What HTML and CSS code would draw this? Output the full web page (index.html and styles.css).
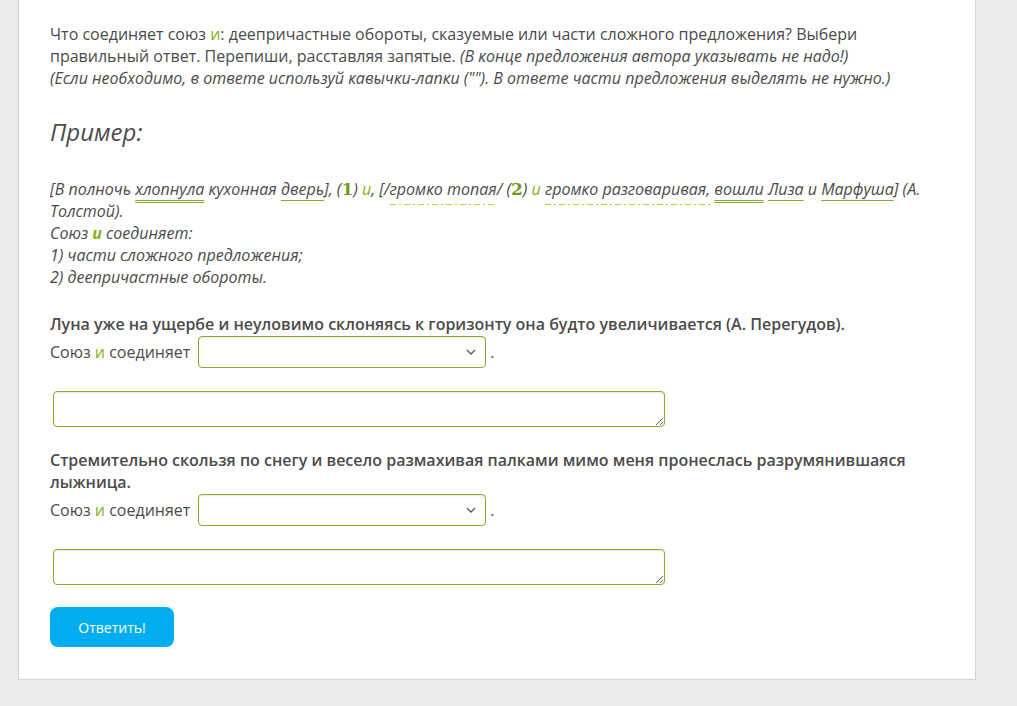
FILE: index.html
```html
<!DOCTYPE html>
<html lang="ru">
<head>
    <meta charset="UTF-8">
    <title>Союз и</title>
    <link rel="stylesheet" href="styles.css">
</head>
<body>
    <div class="card">
        <p class="task">
            Что соединяет союз <span class="green">и</span>: деепричастные обороты, сказуемые или части сложного предложения? Выбери правильный ответ. Перепиши, расставляя запятые. <i>(В конце предложения автора указывать не надо!)</i><br>
            <i>(Если необходимо, в ответе используй кавычки-лапки (""). В ответе части предложения выделять не нужно.)</i>
        </p>

        <h2 class="example-title">Пример:</h2>

        <p class="example">
            [В полночь <span class="pred">хлопнула</span> кухонная <span class="subj">дверь</span>], (<b class="num">1</b>) <span class="green">и</span>, [/<span class="adv">громко топая</span>/ (<b class="num">2</b>) <span class="green">и</span> <span class="adv">громко разговаривая,</span> <span class="pred">вошли</span> <span class="subj">Лиза</span> и <span class="subj">Марфуша</span>] (А. Толстой).<br>
            Союз <b class="green">и</b> соединяет:<br>
            1) части сложного предложения;<br>
            2) деепричастные обороты.
        </p>

        <div class="question first">
            <p class="sentence">Луна уже на ущербе и неуловимо склоняясь к горизонту она будто увеличивается (А. Перегудов).</p>
            <div class="choice">
                <span class="label">Союз <span class="green">и</span> соединяет</span>
                <span class="select-wrap">
                    <select class="pick"><option></option></select>
                    <svg class="chevron" width="10" height="6" viewBox="0 0 10 6"><path d="M1 1l4 4 4-4" fill="none" stroke="#555" stroke-width="1.3"/></svg>
                </span>
                <span class="dot">.</span>
            </div>
            <textarea class="answer"></textarea>
        </div>

        <div class="question">
            <p class="sentence">Стремительно скользя по снегу и весело размахивая палками мимо меня пронеслась разрумянившаяся лыжница.</p>
            <div class="choice">
                <span class="label">Союз <span class="green">и</span> соединяет</span>
                <span class="select-wrap">
                    <select class="pick"><option></option></select>
                    <svg class="chevron" width="10" height="6" viewBox="0 0 10 6"><path d="M1 1l4 4 4-4" fill="none" stroke="#555" stroke-width="1.3"/></svg>
                </span>
                <span class="dot">.</span>
            </div>
            <textarea class="answer"></textarea>
        </div>

        <button class="submit">Ответить!</button>
    </div>
</body>
</html>
```

FILE: styles.css
```css
body {
    margin: 0;
    background: #ececec;
    font-family: "Open Sans", sans-serif;
    font-size: 16px;
    color: #4b4b4b;
}

.card {
    width: 894px;
    margin-left: 18px;
    padding: 23px 31px 32px 31px;
    background: #fff;
    border: 1px solid #d4d4d4;
    border-top: none;
}

p {
    margin: 0;
}

.task {
    line-height: 22px;
}

.green {
    color: #82b31a;
}

.example-title {
    margin: 27px 0 0 0;
    font-size: 24px;
    font-weight: normal;
    font-style: italic;
    line-height: 32px;
    color: #4b4b4b;
}

.example {
    margin-top: 30px;
    font-style: italic;
    line-height: 22px;
}

.num {
    font-family: "DejaVu Serif", serif;
    font-style: normal;
    font-size: 17px;
    line-height: 18px;
    color: #6f9a22;
}

.pred {
    text-decoration: underline double #8aaa2c;
    text-decoration-thickness: 1px;
    text-underline-offset: 5px;
}

.subj {
    text-decoration: underline #8aaa2c;
    text-underline-offset: 5px;
}

.adv {
    padding-bottom: 5px;
    background-image: linear-gradient(to right, #c4c83a 0 6px, transparent 6px 9px, #c4c83a 9px 11px, transparent 11px 14px);
    background-size: 14px 1px;
    background-repeat: repeat-x;
    background-position: left bottom;
}

.question {
    margin-top: 22px;
}

.question.first {
    margin-top: 25px;
}

.sentence {
    font-weight: 600;
    line-height: 22px;
}

.choice {
    display: flex;
    align-items: center;
    gap: 8px;
    margin-top: 1px;
}

.choice .dot {
    margin-left: -4px;
}

.select-wrap {
    position: relative;
    display: flex;
}

.pick {
    appearance: none;
    width: 288px;
    height: 32px;
    border: 1px solid #8aaa2c;
    border-radius: 4px;
    background: #fff;
    box-shadow: inset 0 1px 2px rgba(0, 0, 0, 0.1);
}

.chevron {
    position: absolute;
    right: 10px;
    top: 13px;
    pointer-events: none;
}

.answer {
    display: block;
    box-sizing: border-box;
    width: 612px;
    height: 36px;
    margin: 23px 0 0 3px;
    border: 1px solid #8aaa2c;
    border-radius: 4px;
    box-shadow: inset 0 1px 2px rgba(0, 0, 0, 0.1);
    resize: both;
}

.submit {
    margin-top: 22px;
    width: 124px;
    height: 40px;
    border: none;
    border-radius: 8px;
    background: #00aeef;
    color: #fff;
    font-family: "Open Sans", sans-serif;
    font-size: 14px;
}
```
